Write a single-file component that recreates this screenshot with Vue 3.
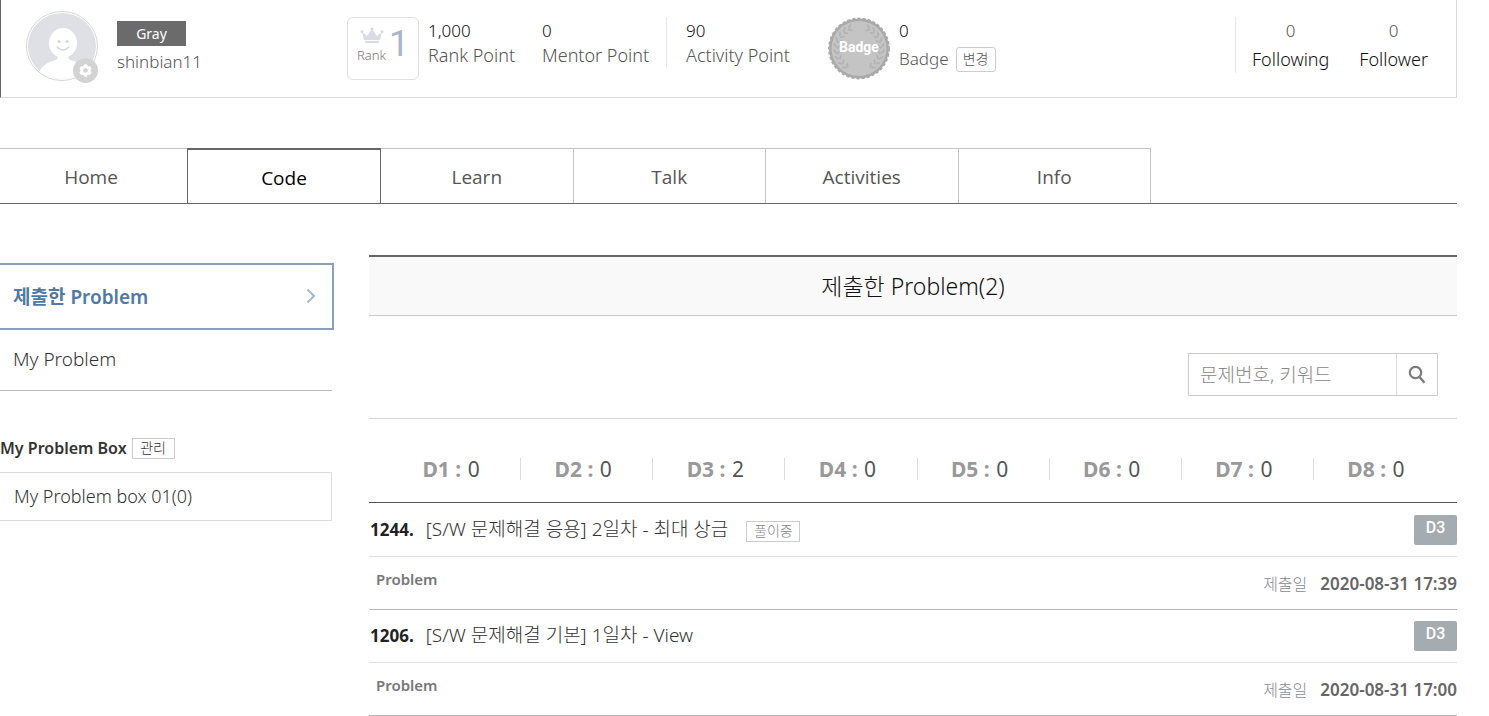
<script setup>
import { ref } from 'vue'

const keyword = ref('')
const tabs = ['Home', 'Code', 'Learn', 'Talk', 'Activities', 'Info']
const activeTab = ref('Code')
const levels = [
  { name: 'D1', count: 0 },
  { name: 'D2', count: 0 },
  { name: 'D3', count: 2 },
  { name: 'D4', count: 0 },
  { name: 'D5', count: 0 },
  { name: 'D6', count: 0 },
  { name: 'D7', count: 0 },
  { name: 'D8', count: 0 },
]
const problems = [
  { id: 1244, title: '[S/W 문제해결 응용] 2일차 - 최대 상금', state: '풀이중', level: 'D3', date: '2020-08-31 17:39' },
  { id: 1206, title: '[S/W 문제해결 기본] 1일차 - View', state: '', level: 'D3', date: '2020-08-31 17:00' },
]
const leaves = [-66, -51, -36, -21, -6, 9, 24, 39, 54]
</script>

<template>
  <div class="page">
    <header class="profile">
      <div class="avatar">
        <svg class="face" viewBox="0 0 72 70" aria-hidden="true">
          <defs>
            <clipPath id="disc"><ellipse cx="36" cy="35" rx="34" ry="33" /></clipPath>
          </defs>
          <ellipse cx="36" cy="35" rx="35.5" ry="34.5" fill="#fff" stroke="#d6d7dc" />
          <g clip-path="url(#disc)">
            <rect width="72" height="70" fill="#dfe0e6" />
            <path d="M12 62C17 53 23 51 30 49q2-1 2-5h10q0 4 2 5C54 51 63 57 66 74H8z" fill="#fff" />
            <ellipse cx="37" cy="32" rx="14" ry="15" fill="#fff" />
          </g>
          <circle cx="33" cy="30.500" r="1.600" fill="#d6d7dd" />
          <circle cx="41" cy="30.500" r="1.600" fill="#d6d7dd" />
          <path d="M31 36q6 6 12 0" fill="none" stroke="#d6d7dd" stroke-width="1.500" stroke-linecap="round" />
        </svg>
        <button class="gear" type="button" aria-label="Settings">
          <svg viewBox="0 0 25 25" aria-hidden="true">
            <circle cx="12.500" cy="12.500" r="12.500" fill="#d3d3d3" />
            <g fill="#fff">
              <circle cx="12.500" cy="12.500" r="5" />
              <rect v-for="a in [0, 60, 120]" :key="a" x="10.700" y="6.200" width="3.600" height="12.600" rx="1" :transform="`rotate(${a} 12.500 12.500)`" />
            </g>
            <circle cx="12.500" cy="12.500" r="2.300" fill="#d3d3d3" />
          </svg>
        </button>
      </div>
      <div class="who">
        <span class="grade">Gray</span>
        <span class="user">shinbian11</span>
      </div>
      <div class="rank">
        <div class="rank-left">
          <svg viewBox="0 0 24 17" aria-hidden="true">
            <g fill="#d9dbe5">
              <path d="M4 13L2 5l5 4 5-7 5 7 5-4-2 8z" />
              <rect x="5" y="14" width="14" height="2" />
              <circle cx="12" cy="2" r="1.600" /><circle cx="2" cy="4.500" r="1.500" /><circle cx="22" cy="4.500" r="1.500" />
            </g>
          </svg>
          <span>Rank</span>
        </div>
        <strong>1</strong>
      </div>
      <dl class="point rank-point"><dd>1,000</dd><dt>Rank Point</dt></dl>
      <dl class="point mentor-point"><dd>0</dd><dt>Mentor Point</dt></dl>
      <dl class="point activity-point"><dd>90</dd><dt>Activity Point</dt></dl>
      <svg class="medal" viewBox="0 0 62 63" aria-hidden="true">
        <circle cx="31" cy="31.500" r="30" fill="#a9a9a9" />
        <circle cx="31" cy="31.500" r="30.200" fill="none" stroke="#a9a9a9" stroke-width="1.400" stroke-dasharray="3.200 2" />
        <circle cx="31" cy="31.500" r="27.500" fill="#c4c4c4" />
        <g fill="#b3b3b3">
          <g v-for="a in leaves" :key="a">
            <g :transform="`rotate(${a} 31 31.500)`">
              <ellipse cx="55" cy="31" rx="1" ry="2.800" transform="rotate(35 55 31)" />
              <ellipse cx="51.500" cy="32" rx="1" ry="2.600" transform="rotate(-40 51.500 32)" />
            </g>
            <g :transform="`rotate(${-a} 31 31.500)`">
              <ellipse cx="7" cy="31" rx="1" ry="2.800" transform="rotate(-35 7 31)" />
              <ellipse cx="10.500" cy="32" rx="1" ry="2.600" transform="rotate(40 10.500 32)" />
            </g>
          </g>
        </g>
        <text x="31" y="35" text-anchor="middle">Badge</text>
      </svg>
      <div class="badges">
        <span class="num">0</span>
        <div class="badge-line"><span>Badge</span><button type="button">변경</button></div>
      </div>
      <div class="follow">
        <a href="#following"><span>0</span>Following</a>
        <a href="#follower"><span>0</span>Follower</a>
      </div>
    </header>

    <nav class="tabs">
      <a v-for="t in tabs" :key="t" :href="'#' + t.toLowerCase()" :class="{ active: t === activeTab }" @click.prevent="activeTab = t">{{ t }}</a>
    </nav>

    <div class="columns">
      <aside>
        <a class="side-link current" href="#submitted">
          제출한 Problem
          <svg viewBox="0 0 10 16" aria-hidden="true"><path d="M1.500 1.500L8 8l-6.500 6.500" fill="none" stroke="#a3b7ce" stroke-width="2" /></svg>
        </a>
        <a class="side-link" href="#my-problem">My Problem</a>
        <div class="box-head">
          <h2>My Problem Box</h2>
          <button type="button">관리</button>
        </div>
        <a class="box-item" href="#box-01">My Problem box 01(0)</a>
      </aside>

      <main>
        <h1>제출한 Problem(2)</h1>
        <form class="search" @submit.prevent>
          <div class="field">
            <input v-model="keyword" type="text" placeholder="문제번호, 키워드" aria-label="문제번호, 키워드">
            <button type="submit" aria-label="Search">
              <svg viewBox="0 0 18 20" aria-hidden="true">
                <circle cx="7.500" cy="7.500" r="5.700" fill="none" stroke="#7b7b7b" stroke-width="2.200" />
                <path d="M11.500 12l5 5.800" stroke="#7b7b7b" stroke-width="2.400" />
              </svg>
            </button>
          </div>
        </form>
        <ul class="levels">
          <li v-for="l in levels" :key="l.name"><b>{{ l.name }} :</b> {{ l.count }}</li>
        </ul>
        <article v-for="p in problems" :key="p.id">
          <div class="title">
            <strong>{{ p.id }}.</strong>
            <a :href="'#' + p.id">{{ p.title }}</a>
            <span v-if="p.state" class="state">{{ p.state }}</span>
            <span class="level">{{ p.level }}</span>
          </div>
          <div class="meta">
            <b class="kind">Problem</b>
            <span class="label">제출일</span>
            <time>{{ p.date }}</time>
          </div>
        </article>
      </main>
    </div>
  </div>
</template>

<style>
body {
  margin: 0;
  background: #fff;
}
</style>

<style scoped>
.page {
  padding-right: 32px;
  font-family: "Noto Sans", "Noto Sans CJK KR", sans-serif;
  color: #333;
}
* { box-sizing: border-box; }
a { color: inherit; text-decoration: none; }
button { padding: 0; font-family: inherit; background: #fff; cursor: pointer; }
h1, h2, dl, dd, ul { margin: 0; padding: 0; }

.profile {
  display: flex;
  align-items: flex-start;
  height: 98px;
  padding: 11px 28px 0 25px;
  border: 1px solid #d9d9d9;
  border-top: 0;
  border-left-color: #666;
  font-size: 17px;
  font-weight: 300;
  line-height: 24px;
}
.avatar { position: relative; flex: none; width: 72px; height: 70px; }
.face { display: block; width: 72px; height: 70px; }
.gear { position: absolute; right: 0; bottom: -2px; width: 25px; height: 25px; border: 0; border-radius: 50%; }
.gear svg { display: block; width: 25px; height: 25px; }
.who { display: flex; flex-direction: column; flex: none; gap: 4px; width: 230px; margin: 10px 0 0 19px; color: #555; }
.grade { width: 69px; height: 25px; background: #6b6b6b; color: #fff; font-size: 14px; font-weight: 400; line-height: 25px; text-align: center; }
.rank { display: flex; flex: none; width: 72px; height: 63px; margin-top: 6px; padding: 8px 0 0 9px; border: 1px solid #e0e0e0; border-radius: 6px; color: #777; font-size: 13px; }
.rank-left { display: flex; flex-direction: column; width: 31px; line-height: 20px; }
.rank-left svg { width: 24px; height: 17px; margin: 1px 0 1px 3px; }
.rank strong { margin-left: 1px; color: #a9b3ca; font-family: Roboto, sans-serif; font-size: 36px; font-weight: 400; line-height: 36px; }
.point { flex: none; height: 50px; margin-top: 6px; padding-top: 2px; }
.point dd, .num { color: #111; }
.point dt { font-size: 18px; }
.point dt, .badge-line { color: #555; }
.rank-point { width: 114px; margin-left: 9px; }
.mentor-point { width: 125px; border-right: 1px solid #e5e6ee; }
.activity-point { width: 142px; margin-left: 19px; }
.medal { flex: none; width: 62px; height: 63px; margin-top: 6px; }
.medal text { fill: #fff; font: 700 14px Roboto, sans-serif; }
.badges { margin: 8px 0 0 9px; }
.num { display: block; }
.badge-line { display: flex; align-items: center; gap: 7px; height: 32px; }
.badge-line button { width: 40px; height: 25px; border: 1px solid #ccc; border-radius: 3px; color: #555; font-size: 14px; font-weight: 300; line-height: 20px; }
.follow { display: flex; gap: 30px; height: 56px; margin: 6px 0 0 auto; padding: 2px 0 0 16px; border-left: 1px solid #e5e6ee; color: #111; font-size: 18px; text-align: center; }
.follow a { line-height: 26px; }
.follow span { display: block; color: #555; font-size: 17px; line-height: 24px; margin-bottom: 3px; }

.tabs { display: grid; grid-template-columns: 187px 194px repeat(4, 1fr); height: 56px; margin-top: 50px; padding-right: 306px; border-bottom: 1px solid #666; font-family: "Open Sans", sans-serif; font-size: 19px; text-align: center; color: #555; }
.tabs a { height: 55px; border: 1px solid #c4c4c4; border-width: 1px 1px 0 0; line-height: 56px; }
.tabs a:first-child { padding-right: 5px; border-right: 0; }
.tabs .active { border: 1px solid #666; border-width: 2px 1px 0; color: #000; }

.columns { display: grid; grid-template-columns: 334px minmax(0, 1fr); gap: 35px; margin-top: 51px; }
aside { padding-top: 8px; }
.side-link { display: flex; align-items: center; justify-content: space-between; width: 332px; height: 61px; padding: 0 0 2px 13px; border-bottom: 1px solid #bbb; font-size: 19px; font-weight: 300; }
.current { width: 334px; height: 67px; padding: 0 16px 2px 13px; border: 2px solid #88a0bd; border-left: 0; color: #4f7aa5; font-weight: 600; }
.current svg { width: 10px; height: 16px; }
.box-head { display: flex; align-items: center; gap: 5px; margin: 46px 0 13px; }
.box-head h2 { font-size: 16px; font-weight: 600; line-height: 22px; }
.box-head button { width: 43px; height: 21px; border: 1px solid #ccc; color: #333; font-size: 14px; font-weight: 300; line-height: 18px; }
.box-item { display: block; width: 332px; height: 49px; padding-left: 14px; border: 1px solid #ddd; border-left: 0; font-size: 18px; font-weight: 300; line-height: 46px; }

main { font-weight: 300; }
h1 { height: 61px; border-top: 2px solid #666; border-bottom: 1px solid #ccc; background: #f9f9f9; color: #111; font-size: 23px; font-weight: 300; line-height: 58px; text-align: center; }
.search { display: flex; justify-content: flex-end; height: 103px; padding: 37px 19px 0; border-bottom: 1px solid #d5d5d5; }
.field { display: flex; width: 250px; height: 43px; border: 1px solid #ccc; }
.field input { flex: 1; min-width: 0; padding: 0 11px; border: 0; outline: 0; font: inherit; font-size: 19px; color: #333; }
.field input::placeholder { color: #888; opacity: 1; }
.field button { display: grid; place-items: center; width: 41px; border: 0; border-left: 1px solid #ddd; }
.field svg { width: 18px; height: 20px; }
.levels { display: flex; align-items: center; height: 84px; margin-bottom: 1px; padding: 17px 11px 0 20px; border-bottom: 1px solid #555; color: #555; font-size: 21px; list-style: none; font-weight: 400; }
.levels li { flex: 1; height: 22px; padding-right: 7px; border-right: 1px solid #ddd; line-height: 23px; text-align: center; }
.levels li:last-child { border-right-color: transparent; }
.levels b { margin-right: 1px; color: #999; font-weight: 700; }
.title { display: flex; align-items: center; height: 53px; padding-left: 1px; border-bottom: 1px solid #e0e0e0; font-size: 19px; }
.title a { padding-bottom: 4px; }
.title strong { margin-right: 12px; padding-bottom: 2px; color: #222; font-weight: 700; font-size: 17px; }
.state { width: 54px; height: 21px; margin: 2px 0 0 18px; border: 1px solid #ccc; color: #888; font-size: 14px; line-height: 18px; text-align: center; }
.level { width: 43px; height: 30px; margin-left: auto; border-radius: 2px; background: #a4abb1; color: #fff; font: 500 16px/26px Roboto, sans-serif; text-align: center; }
.meta { display: flex; align-items: center; height: 53px; padding-left: 7px; border-bottom: 1px solid #b5b5b5; font-size: 16px; }
.kind { margin: 0 auto 8px 0; color: #777; font-weight: 600; font-size: 15px; }
.label { margin-right: 13px; color: #888b93; }
time { color: #666; font-size: 17px; font-weight: 600; }
</style>
